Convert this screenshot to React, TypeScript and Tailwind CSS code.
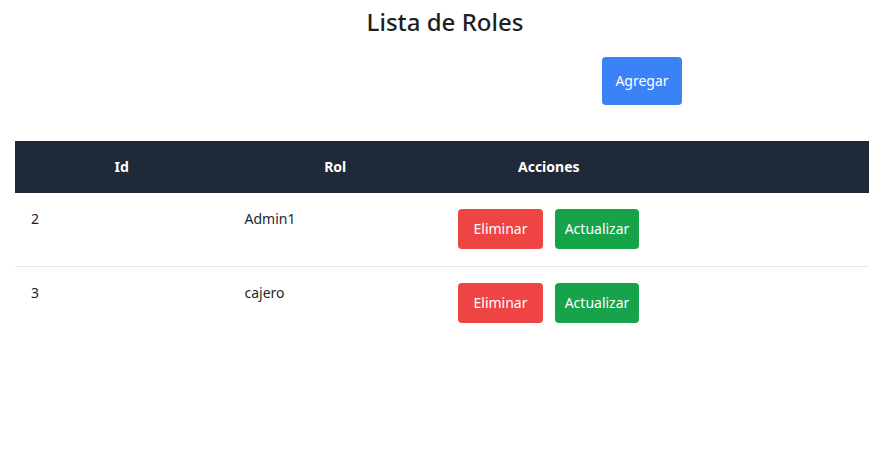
import React from 'react';

const roles = [
  { id: 2, name: 'Admin1' },
  { id: 3, name: 'cajero' },
];

export default function App() {
  return (
    <div className="min-h-screen bg-white text-[#1f1f1f]" style={{ fontFamily: '"Noto Sans", sans-serif' }}>
      <h1 className="pt-[6px] text-center text-2xl font-medium leading-8">Lista de Roles</h1>

      <div className="mt-[19px] flex justify-end pr-[208px]">
        <button className="h-12 w-20 rounded bg-[#3b82f6] text-sm text-white">Agregar</button>
      </div>

      <div className="ml-[15px] mr-[21px] mt-9">
        <table className="w-full table-fixed border-collapse text-sm">
          <thead>
            <tr className="h-[52px] bg-[#1f2937] text-white">
              <th className="font-bold">Id</th>
              <th className="font-bold">Rol</th>
              <th className="font-bold">Acciones</th>
              <th></th>
            </tr>
          </thead>
          <tbody>
            {roles.map((r) => (
              <tr key={r.id} className="border-b border-gray-200 last:border-0">
                <td className="px-4 pt-4 pb-[17px] align-top leading-5">{r.id}</td>
                <td className="px-4 pt-4 pb-[17px] align-top leading-5">{r.name}</td>
                <td className="px-4 pt-4 pb-[17px] align-top">
                  <div className="flex gap-3">
                    <button className="h-10 w-[85px] rounded bg-[#ef4444] text-sm text-white">Eliminar</button>
                    <button className="h-10 w-[84px] rounded bg-[#16a34a] text-sm text-white">Actualizar</button>
                  </div>
                </td>
                <td></td>
              </tr>
            ))}
          </tbody>
        </table>
      </div>
    </div>
  );
}
